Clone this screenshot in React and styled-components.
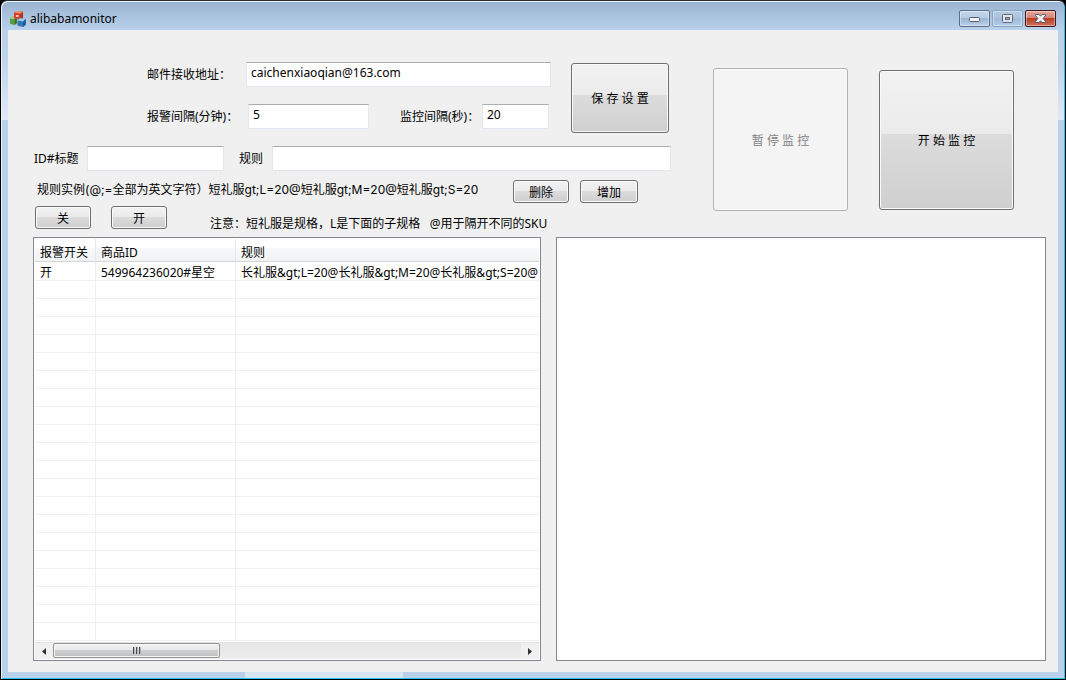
import React from "react";
import styled, { createGlobalStyle, css } from "styled-components";

const GlobalStyle = createGlobalStyle`
  * { box-sizing: border-box; }
  body {
    margin: 0;
    background: #000;
    color: #000;
    font: 12px/16px "Noto Sans", "Noto Sans CJK SC", sans-serif;
  }
  button, input { font: inherit; color: inherit; }
`;

const Window = styled.div`
  display: flex;
  flex-direction: column;
  min-height: 100vh;
  padding: 0 7px 7px;
  border: 1px solid #000;
  border-top-color: #2b2b30;
  border-radius: 7px 7px 0 0;
  box-shadow: inset 1px 1px 0 #eef5fc, inset -1px -1px 0 #22c8ea;
  background:
    linear-gradient(#d7e4f2, #d7e4f2) 244px 100% / 158px 7px no-repeat,
    linear-gradient(#98b3d2 0, #b9d1ea 29px, #bfd4eb 60px, #dfeaf6 119px, #b9d1ea 119px);
`;

const TitleBar = styled.header`
  display: flex;
  align-items: center;
  gap: 4px;
  height: 29px;
  padding: 6px 2px 0;
`;

const Title = styled.h1`
  flex: 1;
  margin: 0;
  font-size: 12px;
  font-weight: 400;
`;

const WindowButtons = styled.div`
  display: flex;
  gap: 2px;
`;

const captionTones = {
  normal: css`
    border-color: #5b6f8d;
    background: linear-gradient(#c5d6e9 0, #b4c9e0 50%, #9db6d2 50%, #b8cfe8 100%);
  `,
  faded: css`
    border-color: #89a3c4;
    background: linear-gradient(#b4cae2 0, #abc4df 50%, #a1bbd8 50%, #b3cce7 100%);
  `,
  close: css`
    border-color: #43151c;
    background: linear-gradient(#e5a79b 0, #d48575 46%, #b83a23 46%, #cf7058 100%);
  `,
};

const CaptionButton = styled.button`
  display: grid;
  place-items: center;
  width: 31px;
  height: 17px;
  padding: 0;
  border: 1px solid;
  border-radius: 2px;
  box-shadow: inset 0 0 0 1px rgba(255, 255, 255, 0.4);
  ${(p) => captionTones[p.$tone]}
`;

const Client = styled.main`
  display: flex;
  flex: 1;
  flex-direction: column;
  gap: 8px;
  padding: 32px 12px 11px 25px;
  background: #f0f0f0;
`;

const Controls = styled.section`
  display: flex;
  gap: 42px;
`;

const Settings = styled.form`
  display: flex;
  flex-direction: column;
  width: 638px;
`;

const General = styled.div`
  display: flex;
  gap: 20px;
  padding-left: 114px;
  margin-bottom: 13px;
`;

const Fields = styled.div`
  display: flex;
  flex: 1;
  flex-direction: column;
  gap: 17px;
`;

const Field = styled.div`
  display: flex;
  align-items: center;
`;

const Label = styled.label`
  width: ${(p) => p.$width}px;
  padding-left: ${(p) => p.$indent || 0}px;
  white-space: nowrap;
`;

const TextBox = styled.input`
  flex: ${(p) => (p.$width ? `0 0 ${p.$width}px` : 1)};
  min-width: 0;
  height: 25px;
  padding: 0 4px 4px;
  border: 1px solid #e2e6ee;
  border-top-color: #abadb3;
  background: #fff;
`;

const PushButton = styled.button`
  width: ${(p) => p.$width}px;
  height: ${(p) => p.$height || 23}px;
  padding: 2px 0 0;
  border: 1px solid #707070;
  border-radius: 3px;
  box-shadow: inset 0 0 0 1px #fafafa;
  background: linear-gradient(#f2f2f2 0, #ebebeb 46%, #dcdcdc 46%, #cfcfcf 100%);

  &:disabled {
    border-color: #adb2b5;
    background: #f4f4f4;
    color: #838383;
  }
`;

const SaveSlot = styled.div`
  padding-top: 1px;
  margin-right: 2px;
  height: 71px;
`;

const ExampleRow = styled.div`
  display: flex;
  gap: 11px;
  margin: 9px 0 3px;
  padding-left: 4px;
`;

const Example = styled.p`
  flex: 0 0 465px;
  margin: 0;
  padding-top: 2px;
  font-family: Inter, "Noto Sans CJK SC", sans-serif;
  white-space: pre;
`;

const SwitchRow = styled.div`
  display: flex;
  gap: 20px;
  padding-left: 2px;
`;

const Note = styled.p`
  height: 23px;
  margin: 0;
  padding: 10px 0 0 23px;
  white-space: pre;
`;

const Actions = styled.div`
  display: flex;
  align-items: center;
  gap: 31px;
  height: 155px;
`;

const Panels = styled.section`
  display: grid;
  flex: 1;
  grid-template-columns: 508fr 490fr;
  gap: 15px;
`;

const Panel = styled.div`
  display: flex;
  flex-direction: column;
  min-width: 0;
  padding: 1px;
  border: 1px solid #828790;
  background: #fff;
`;

const Table = styled.table`
  width: 100%;
  table-layout: fixed;
  border-collapse: separate;
  border-spacing: 0;
`;

const Column = styled.col`
  width: ${(p) => (p.$width ? `${p.$width}px` : "auto")};
`;

const HeadCell = styled.th`
  height: 23px;
  padding: 5px 5px 0;
  border-right: 1px solid #e3e8ee;
  border-bottom: 1px solid #d5d5d5;
  background: linear-gradient(#fff 0, #fff 42%, #f7f8fa 42%, #f1f2f4 100%);
  font-weight: 400;
  line-height: 17px;
  text-align: left;
  white-space: nowrap;

  &:last-child { border-right: 0; }
`;

const Cell = styled.td`
  height: 18px;
  padding: 2px 5px 0;
  overflow: hidden;
  border-right: 1px solid #f0f0f0;
  border-bottom: 1px solid #f0f0f0;
  line-height: 15px;
  white-space: nowrap;

  tr:first-child > & { height: 19px; padding-top: 3px; }
  &:last-child { border-right: 0; padding-right: 0; }
`;

const ScrollBar = styled.div`
  display: flex;
  height: 17px;
  margin-top: auto;
  border-top: 1px solid #e3e3e3;
  background: linear-gradient(#e6e6e6, #eee);
`;

const ArrowButton = styled.button`
  display: grid;
  place-items: center;
  width: 18px;
  padding: 0;
  border: 0;
  background: #f0f0f0;
`;

const Track = styled.div`
  flex: 1;
`;

const Thumb = styled.button`
  display: grid;
  place-items: center;
  width: 167px;
  height: 15px;
  padding: 0;
  border: 1px solid #949494;
  border-radius: 2px;
  box-shadow: inset 0 0 0 1px #f6f6f6;
  background: linear-gradient(#f3f3f3 0, #e6e6e6 46%, #cfd0d2 46%, #bebfc1 100%);
`;

function AppIcon() {
  return (
    <svg width="16" height="16" viewBox="0 0 16 16" aria-hidden="true">
      <path d="M0 7.4 2.6 5.2 7 6v6L4.6 14 0 12.8Z" fill="#5d9c3c" />
      <path d="M0 7.4 2.6 5.2 7 6 4.6 8.2Z" fill="#a7d18a" />
      <path d="M4.6 8.2 7 6v6L4.6 14Z" fill="#3d7328" />
      <path d="M4 1.6 6.4 0 13 .8v5.6L10.6 8.4 4 7.4Z" fill="#d8402a" />
      <path d="M4 1.6 6.4 0 13 .8 10.6 2.6Z" fill="#f0967a" />
      <path d="M6 4h2.4v2H6Z" fill="#fbd3c6" />
      <path d="M10.6 2.6 13 .8v5.6l-2.4 2Z" fill="#b92e20" />
      <path d="M7.5 9.4 10 7.2l5.6.8v5.6L13.2 16l-5.7-1.2Z" fill="#2f76b5" />
      <path d="M7.5 9.4 10 7.2l5.6.8-2.4 2.4Z" fill="#9dcdf0" />
      <path d="M13.2 10.4 15.6 8v5.6L13.2 16Z" fill="#1d5490" />
    </svg>
  );
}

const glyph = { stroke: "#525a70", fill: "#f4f4f4" };

function MinimizeIcon() {
  return (
    <svg width="11" height="7" viewBox="0 0 11 7" aria-hidden="true">
      <rect x=".5" y="2.5" width="10" height="4" rx="1" {...glyph} />
    </svg>
  );
}

function MaximizeIcon() {
  return (
    <svg width="11" height="9" viewBox="0 0 11 9" aria-hidden="true">
      <rect x=".5" y=".5" width="10" height="8" rx="1" stroke="#5c6880" fill="#e4e4e6" />
      <rect x="3.5" y="3.5" width="4" height="2" stroke="#5c6880" fill="#9db6d6" />
    </svg>
  );
}

function CloseIcon() {
  return (
    <svg width="11" height="9" viewBox="0 0 11 9" aria-hidden="true">
      <path
        d="M.5.5h3.4l1.6 1.7L7.1.5h3.4v1.1L8.1 4.5l2.4 2.9v1.1H7.1L5.5 6.8 3.9 8.5H.5V7.4l2.4-2.9L.5 1.6Z"
        {...glyph}
      />
    </svg>
  );
}

function Arrow({ right }) {
  return (
    <svg width="4" height="7" viewBox="0 0 4 7" aria-hidden="true">
      <path d={right ? "M0 0v7l4-3.5Z" : "M4 0v7L0 3.5Z"} fill="#333" />
    </svg>
  );
}

function Grip() {
  return (
    <svg width="8" height="7" viewBox="0 0 8 7" aria-hidden="true">
      <path d="M.5 0v7M3.5 0v7M6.5 0v7" stroke="#4a4a4a" />
      <path d="M1.5 0v7M4.5 0v7M7.5 0v7" stroke="#b4b4b4" />
    </svg>
  );
}

const rows = [
  ["开", "549964236020#星空", "长礼服&gt;L=20@长礼服&gt;M=20@长礼服&gt;S=20@"],
  ...Array.from({ length: 20 }, () => ["", "", ""]),
];

export default function App() {
  return (
    <>
      <GlobalStyle />
      <Window>
        <TitleBar>
          <AppIcon />
          <Title>alibabamonitor</Title>
          <WindowButtons>
            <CaptionButton $tone="normal" aria-label="最小化"><MinimizeIcon /></CaptionButton>
            <CaptionButton $tone="faded" aria-label="最大化"><MaximizeIcon /></CaptionButton>
            <CaptionButton $tone="close" aria-label="关闭"><CloseIcon /></CaptionButton>
          </WindowButtons>
        </TitleBar>
        <Client>
          <Controls>
            <Settings onSubmit={(e) => e.preventDefault()}>
              <General>
                <Fields>
                  <Field>
                    <Label htmlFor="mail" $width={99}>邮件接收地址：</Label>
                    <TextBox id="mail" defaultValue="caichenxiaoqian@163.com" />
                  </Field>
                  <Field>
                    <Label htmlFor="alarm" $width={101}>报警间隔(分钟)：</Label>
                    <TextBox id="alarm" $width={121} defaultValue="5" />
                    <Label htmlFor="poll" $width={113} $indent={31}>监控间隔(秒)：</Label>
                    <TextBox id="poll" $width={67} defaultValue="20" />
                  </Field>
                </Fields>
                <SaveSlot>
                  <PushButton type="submit" $width={98} $height={70}>保 存 设 置</PushButton>
                </SaveSlot>
              </General>
              <Field>
                <Label htmlFor="item" $width={54} $indent={1}>ID#标题</Label>
                <TextBox id="item" $width={137} />
                <Label htmlFor="rule" $width={48} $indent={15}>规则</Label>
                <TextBox id="rule" />
              </Field>
              <ExampleRow>
                <Example>规则实例(@;=全部为英文字符）短礼服gt;L=20@短礼服gt;M=20@短礼服gt;S=20</Example>
                <PushButton type="button" $width={56}>删除</PushButton>
                <PushButton type="button" $width={58}>增加</PushButton>
              </ExampleRow>
              <SwitchRow>
                <PushButton type="button" $width={56}>关</PushButton>
                <PushButton type="button" $width={56}>开</PushButton>
                <Note>注意：短礼服是规格，L是下面的子规格   @用于隔开不同的SKU</Note>
              </SwitchRow>
            </Settings>
            <Actions>
              <PushButton $width={135} $height={143} disabled>暂 停 监 控</PushButton>
              <PushButton $width={135} $height={140}>开 始 监 控</PushButton>
            </Actions>
          </Controls>
          <Panels>
            <Panel>
              <Table>
                <colgroup>
                  <Column $width={61} />
                  <Column $width={140} />
                  <Column />
                </colgroup>
                <thead>
                  <tr>
                    <HeadCell>报警开关</HeadCell>
                    <HeadCell>商品ID</HeadCell>
                    <HeadCell>规则</HeadCell>
                  </tr>
                </thead>
                <tbody>
                  {rows.map((row, i) => (
                    <tr key={i}>
                      {row.map((text, j) => <Cell key={j}>{text}</Cell>)}
                    </tr>
                  ))}
                </tbody>
              </Table>
              <ScrollBar>
                <ArrowButton aria-label="向左滚动"><Arrow /></ArrowButton>
                <Track>
                  <Thumb aria-label="滚动条"><Grip /></Thumb>
                </Track>
                <ArrowButton aria-label="向右滚动"><Arrow right /></ArrowButton>
              </ScrollBar>
            </Panel>
            <Panel />
          </Panels>
        </Client>
      </Window>
    </>
  );
}
